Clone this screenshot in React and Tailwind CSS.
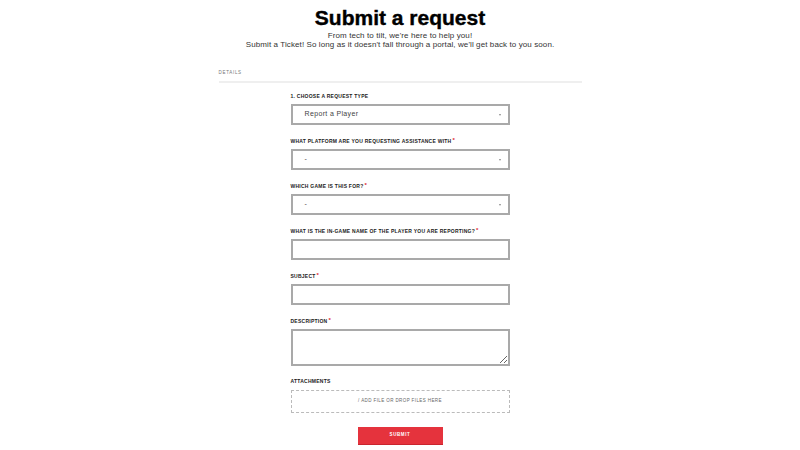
import React from "react";

const fields = [
  { label: "1. Choose a request type", type: "select", value: "Report a Player" },
  { label: "What platform are you requesting assistance with", type: "select", value: "-", required: true },
  { label: "Which game is this for?", type: "select", value: "-", required: true },
  { label: "What is the in-game name of the player you are reporting?", type: "input", required: true },
  { label: "Subject", type: "input", required: true },
  { label: "Description", type: "textarea", required: true },
];

function Label({ text, required }) {
  return (
    <div className="h-[6px] leading-[6px] text-[5px] font-bold uppercase tracking-[0.25px] text-[#222] whitespace-nowrap">
      {text}
      {required && <span className="relative -top-[1.5px] ml-[1px] text-[6px] text-[#e0252f]">*</span>}
    </div>
  );
}

function Field({ field }) {
  return (
    <div className="flex flex-col gap-[5px]">
      <Label text={field.label} required={field.required} />
      {field.type === "select" && (
        <div className="h-[21px] border-2 border-[#a9a9a9] flex items-center justify-between pl-[12px] pr-[7px]">
          <span className="text-[7px] tracking-[0.35px] text-[#444]">{field.value}</span>
          <span className="w-0 h-0 border-l-[1.5px] border-r-[1.5px] border-t-[2px] border-l-transparent border-r-transparent border-t-[#888]" />
        </div>
      )}
      {field.type === "input" && <div className="h-[21px] border-2 border-[#a9a9a9]" />}
      {field.type === "textarea" && (
        <textarea className="block h-[37px] w-full border-2 border-[#a9a9a9] outline-none resize-y" readOnly />
      )}
    </div>
  );
}

export default function App() {
  return (
    <div className="w-[800px] h-[450px] bg-white overflow-hidden" style={{ fontFamily: '"Liberation Sans", Arial, sans-serif' }}>
      {/* HEADER */}
      <div className="pt-[6px] text-center">
        <h1 className="text-[21px] leading-[24px] font-bold text-black [-webkit-text-stroke:0.4px_black]">Submit a request</h1>
        <p className="mt-[1px] text-[8px] leading-[9px] tracking-[0.1px] text-[#333]">
          From tech to tilt, we're here to help you!
          <br />
          Submit a Ticket! So long as it doesn't fall through a portal, we'll get back to you soon.
        </p>
      </div>

      {/* DETAILS */}
      <div className="w-[363px] mx-auto mt-[21px]">
        <div className="pb-[5px] border-b-2 border-[#efefef]">
          <div className="h-[6px] leading-[6px] text-[4.5px] tracking-[0.7px] text-[#777] uppercase">Details</div>
        </div>
      </div>

      {/* FORM */}
      <div className="w-[219px] mx-auto mt-[10px] flex flex-col gap-[13px]">
        {fields.map((f) => (
          <Field key={f.label} field={f} />
        ))}
        <div className="flex flex-col gap-[6px] -mt-[1px]">
          <Label text="Attachments" />
          <div className="h-[23px] border border-dashed border-[#bbb] flex items-center justify-center">
            <span className="text-[4.5px] tracking-[0.4px] uppercase text-[#666]">/ Add file or drop files here</span>
          </div>
        </div>
        <div className="flex justify-center mt-[1px]">
          <button className="w-[85px] h-[18px] bg-[#e5333d] border-b border-[#c9252e] text-white text-[4.5px] font-bold tracking-[0.6px] uppercase">
            Submit
          </button>
        </div>
      </div>
    </div>
  );
}
